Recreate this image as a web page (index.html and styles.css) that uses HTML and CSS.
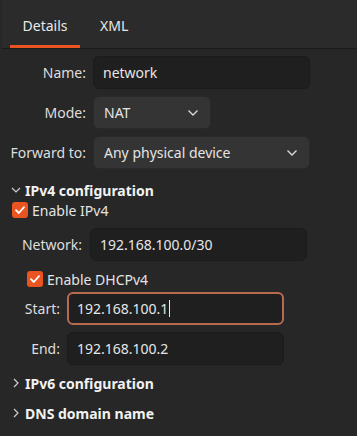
FILE: index.html
```html
<!DOCTYPE html>
<html lang="en">
<head>
    <meta charset="UTF-8">
    <meta name="viewport" content="width=device-width, initial-scale=1.0">
    <title>Network Details</title>
    <link rel="stylesheet" href="styles.css">
</head>
<body>
    <div class="tabs">
        <div class="tab active">Details</div>
        <div class="tab">XML</div>
    </div>

    <div class="page">
        <div class="form-grid top-grid">
            <label>Name:</label>
            <div class="entry wide">network</div>

            <label>Mode:</label>
            <div class="dropdown short">
                <span>NAT</span>
                <svg class="chev" width="12" height="8" viewBox="0 0 12 8"><path d="M1.5 1.5 L6 6 L10.5 1.5" fill="none" stroke="#dcdcdc" stroke-width="1.3"/></svg>
            </div>

            <label>Forward to:</label>
            <div class="dropdown wide">
                <span>Any physical device</span>
                <svg class="chev" width="12" height="8" viewBox="0 0 12 8"><path d="M1.5 1.5 L6 6 L10.5 1.5" fill="none" stroke="#dcdcdc" stroke-width="1.3"/></svg>
            </div>
        </div>

        <div class="expander open">
            <svg class="arrow" width="10" height="10" viewBox="0 0 10 10"><path d="M1 3 L5 7 L9 3" fill="none" stroke="#cfcfcf" stroke-width="1.2"/></svg>
            <span>IPv4 configuration</span>
        </div>

        <div class="check ipv4-check">
            <span class="box"><svg width="16" height="16" viewBox="0 0 16 16"><path d="M4 8.2 L6.8 11 L12 5.2" fill="none" stroke="#fff" stroke-width="1.8" stroke-linecap="round" stroke-linejoin="round"/></svg></span>
            <span>Enable IPv4</span>
        </div>

        <div class="form-grid net-grid">
            <label>Network:</label>
            <div class="entry wide">192.168.100.0/30</div>
        </div>

        <div class="check dhcp-check">
            <span class="box"><svg width="16" height="16" viewBox="0 0 16 16"><path d="M4 8.2 L6.8 11 L12 5.2" fill="none" stroke="#fff" stroke-width="1.8" stroke-linecap="round" stroke-linejoin="round"/></svg></span>
            <span>Enable DHCPv4</span>
        </div>

        <div class="form-grid dhcp-grid">
            <label>Start:</label>
            <div class="entry wide focused">192.168.100.1<span class="cursor"></span></div>

            <label>End:</label>
            <div class="entry wide">192.168.100.2</div>
        </div>

        <div class="expander closed first-closed">
            <svg class="arrow" width="10" height="10" viewBox="0 0 10 10"><path d="M3 1 L7 5 L3 9" fill="none" stroke="#cfcfcf" stroke-width="1.2"/></svg>
            <span>IPv6 configuration</span>
        </div>

        <div class="expander closed">
            <svg class="arrow" width="10" height="10" viewBox="0 0 10 10"><path d="M3 1 L7 5 L3 9" fill="none" stroke="#cfcfcf" stroke-width="1.2"/></svg>
            <span>DNS domain name</span>
        </div>
    </div>
</body>
</html>
```

FILE: styles.css
```css
body {
    margin: 0;
    padding: 0;
    background-color: #272727;
    color: #e4e4e4;
    font-family: 'Noto Sans', sans-serif;
    font-size: 14px;
    width: 357px;
    height: 436px;
    overflow: hidden;
}
.tabs {
    display: flex;
    height: 48px;
    margin-left: 2px;
    padding-left: 8px;
    background-color: #2b2b2b;
    border-bottom: 1px solid #1b1b1b;
}
.tab {
    display: flex;
    align-items: center;
    justify-content: center;
    box-sizing: border-box;
    padding-top: 2px;
    color: #e8e8e8;
}
.tab.active {
    width: 70px;
    border-bottom: 3px solid #e95420;
    padding-top: 5px;
}
.tab + .tab {
    margin-left: 20px;
}
.page {
    padding-top: 7px;
}
.form-grid {
    display: grid;
    row-gap: 7px;
    align-items: center;
}
.form-grid label {
    text-align: right;
    color: #dedede;
}
.top-grid {
    grid-template-columns: 86px 217px;
    column-gap: 7px;
}
.net-grid {
    grid-template-columns: 82px 217px;
    column-gap: 8px;
    margin-top: 9px;
}
.dhcp-grid {
    grid-template-columns: 60px 217px;
    column-gap: 7px;
    margin-top: 4px;
}
.entry, .dropdown {
    height: 33px;
    box-sizing: border-box;
    border-radius: 6px;
    display: flex;
    align-items: center;
}
.entry {
    background-color: #1f1f1f;
    border: 1px solid #1b1b1b;
    padding-left: 9px;
    color: #e6e6e6;
}
.entry.focused {
    border: 2px solid #b86a4e;
    padding-left: 8px;
}
.cursor {
    display: inline-block;
    width: 1px;
    height: 17px;
    margin-left: 1px;
    background-color: #eeeeee;
}
.dropdown {
    background-color: #343434;
    border: 1px solid #2a2a2a;
    padding: 0 11px 0 10px;
    justify-content: space-between;
}
.short {
    width: 118px;
}
.expander {
    display: flex;
    align-items: center;
    font-weight: bold;
    color: #f2f2f2;
    height: 18px;
}
.expander .arrow {
    margin-left: 11px;
    margin-right: 4px;
}
.expander.open {
    margin-top: 12px;
}
.first-closed {
    margin-top: 9px;
}
.first-closed + .expander {
    margin-top: 12px;
}
.check {
    display: flex;
    align-items: center;
    height: 18px;
}
.check .box {
    width: 16px;
    height: 16px;
    border-radius: 3px;
    background-color: #e95420;
    margin-right: 4px;
    display: flex;
}
.ipv4-check {
    margin-top: 2px;
    padding-left: 12px;
}
.dhcp-check {
    margin-top: 9px;
    padding-left: 27px;
}
```
